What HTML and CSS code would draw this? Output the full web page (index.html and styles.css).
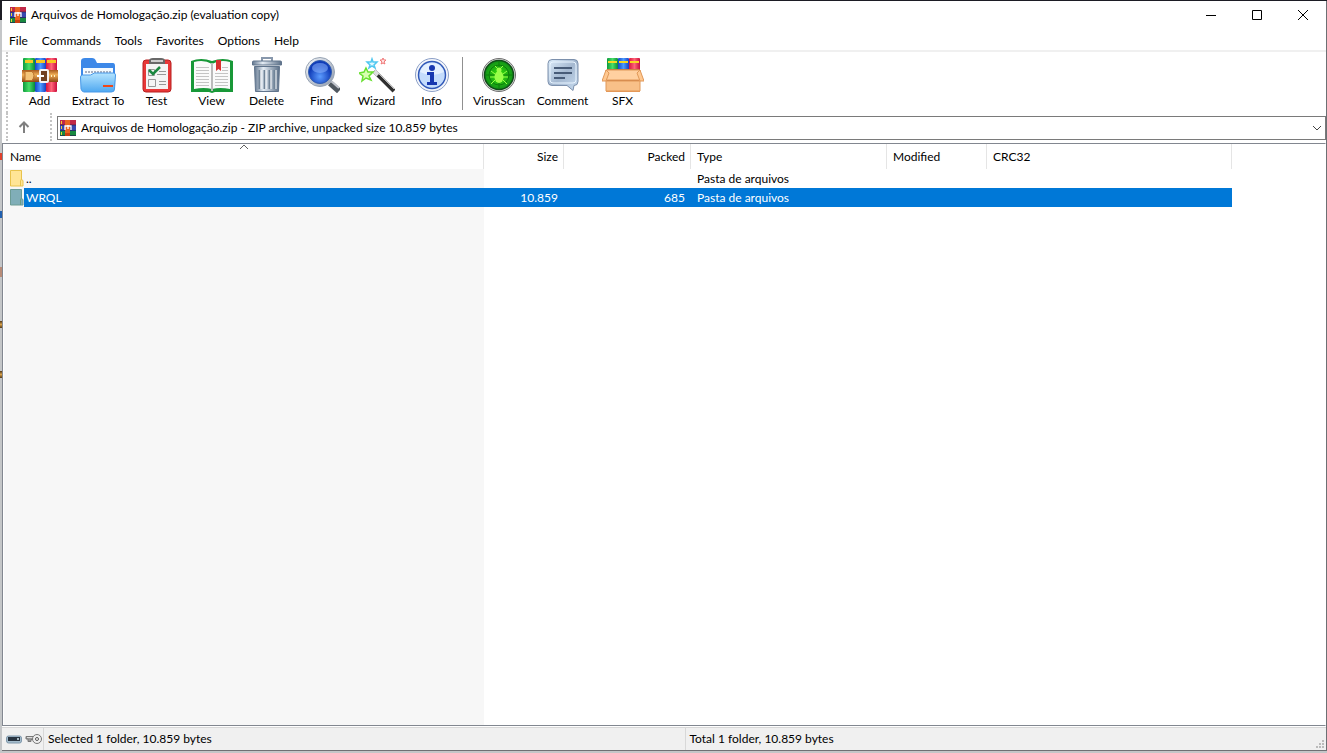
FILE: index.html
```html
<!DOCTYPE html>
<html lang="pt">
<head>
<meta charset="utf-8">
<title>Arquivos de Homologação.zip (evaluation copy)</title>
<link rel="stylesheet" href="styles.css">
</head>
<body>
<svg class="defs" aria-hidden="true">
  <defs>
    <linearGradient id="gGreen"><stop offset="0" stop-color="#0c9a3c"/><stop offset=".5" stop-color="#4ade68"/><stop offset="1" stop-color="#0a8a38"/></linearGradient>
    <linearGradient id="gBlue"><stop offset="0" stop-color="#1746c8"/><stop offset=".5" stop-color="#4b9bff"/><stop offset="1" stop-color="#1c3fc0"/></linearGradient>
    <linearGradient id="gRed"><stop offset="0" stop-color="#d8143c"/><stop offset=".5" stop-color="#ff6478"/><stop offset="1" stop-color="#c80c3c"/></linearGradient>
    <linearGradient id="gBelt" x2="0" y2="1"><stop offset="0" stop-color="#a8581c"/><stop offset=".4" stop-color="#f0b058"/><stop offset="1" stop-color="#8c4410"/></linearGradient>
    <linearGradient id="gFolder" x2="0" y2="1"><stop offset="0" stop-color="#b4e4ff"/><stop offset="1" stop-color="#4fa8f0"/></linearGradient>
    <linearGradient id="gSteel"><stop offset="0" stop-color="#647890"/><stop offset=".35" stop-color="#e4ecf4"/><stop offset="1" stop-color="#5c7088"/></linearGradient>
    <linearGradient id="gSilver" x2="1" y2="1"><stop offset="0" stop-color="#f8fafc"/><stop offset="1" stop-color="#8c98ac"/></linearGradient>
    <radialGradient id="gLens" cy=".7"><stop offset="0" stop-color="#5c9cff"/><stop offset="1" stop-color="#103cb8"/></radialGradient>
    <radialGradient id="gScan"><stop offset="0" stop-color="#38e808"/><stop offset="1" stop-color="#109018"/></radialGradient>
    <linearGradient id="gBubble" x2="1" y2="1"><stop offset="0" stop-color="#dcecfa"/><stop offset=".5" stop-color="#a4b8d0"/><stop offset="1" stop-color="#c8dcf0"/></linearGradient>
    <linearGradient id="gBox" x2="0" y2="1"><stop offset="0" stop-color="#f8c088"/><stop offset="1" stop-color="#e89858"/></linearGradient>
    <symbol id="books" viewBox="0 0 16 16">
      <path fill="#c02848" d="M0 0h16v5H0z"/><path fill="#3848b0" d="M0 5h16v6H0z"/><path fill="#188840" d="M0 11h16v5H0z"/>
      <path stroke="#20204c" d="M0 5h16M0 10.500h16M0 15.500h16" opacity=".65"/>
      <path fill="#f0d030" d="M1 1h1v3H1zM1 6h1v3H1zM1 12h1v3H1z"/>
      <path fill="#e86420" d="M5 0h5v16H5z"/><path fill="#c84010" d="M5 13h5v3H5z"/>
      <path fill="none" stroke="#fff" stroke-width="1.300" d="M5 10V6h6v4M8 5v4"/>
    </symbol>
  </defs>
</svg>
<main class="window">
  <header class="titlebar">
    <svg class="app-icon"><use href="#books"/></svg>
    <h1 class="title">Arquivos de Homologação.zip (evaluation copy)</h1>
    <div class="caption-buttons">
      <button class="caption" aria-label="Minimize"><svg viewBox="0 0 12 12"><path d="M1 6.500h10"/></svg></button>
      <button class="caption" aria-label="Maximize"><svg viewBox="0 0 12 12"><path d="M1.500 1.500h9v9h-9z"/></svg></button>
      <button class="caption" aria-label="Close"><svg viewBox="0 0 12 12"><path d="M1 1l10 10M11 1L1 11"/></svg></button>
    </div>
  </header>
  <nav class="menubar">
    <button class="menu">File</button><button class="menu">Commands</button><button class="menu">Tools</button><button class="menu">Favorites</button><button class="menu">Options</button><button class="menu">Help</button>
  </nav>
  <div class="toolbar">
    <button class="tool"><svg viewBox="0 0 36 36">
      <rect x="1" y="1" width="12" height="34" rx="1" fill="url(#gGreen)"/><rect x="13" y="1" width="11" height="34" rx="1" fill="url(#gBlue)"/><rect x="24" y="1" width="11" height="34" rx="1" fill="url(#gRed)"/>
      <path fill="#f8c820" d="M3 3h8v3H3zM14 3h9v3h-9zM25 3h9v3h-9z"/>
      <path fill="url(#gBelt)" d="M0 13h36v12H0z"/><path fill="#f4c478" stroke="#b87028" d="M3 14.500h7q4 4 0 9H3z"/>
      <rect x="18" y="13" width="8" height="12" rx="1" fill="#704020" stroke="#f4f4f4" stroke-width="2"/><path stroke="#fff" stroke-width="2" d="M15 19h7"/><path fill="#fff0c0" d="M29 18h1v2h-1zM32 18h1v2h-1z"/></svg><span>Add</span></button>
    <button class="tool wide"><svg viewBox="0 0 36 36">
      <path fill="#3c88e8" d="M1 4q0-3 4-3h7q3 0 4 3l1 2h16q2 0 2 3v20H1z"/><path fill="#f4faff" d="M3 11h30v14H3z"/>
      <path stroke="#a8b0c0" stroke-width="2" stroke-dasharray="2 1" d="M5 15h27"/>
      <path fill="url(#gFolder)" stroke="#4898e8" d="M.5 20q0-2 2-2h8l4-2h19q2 0 2 2l-1 14q0 3-3 3H4q-2 0-3-3z"/><path fill="#f04818" d="M23 28h10v2H23z"/></svg><span>Extract To</span></button>
    <button class="tool"><svg viewBox="0 0 36 36">
      <rect x="4" y="3" width="28" height="32" rx="3" fill="#e83838" stroke="#b82020"/><path fill="#f4f4f4" d="M7 7h22v25H7z"/>
      <path fill="#686868" d="M10 4q0-3 4-3h8q4 0 4 3v3H10z"/><path stroke="#ccc" stroke-width="2" d="M12 4h12"/>
      <path fill="none" stroke="#989898" d="M9.500 12.500h6v6h-6zM9.500 22.500h7v7h-7zM20 14.500h7M18 17.500h9M20 24.500h7M20 27.500h7"/>
      <path fill="none" stroke="#1a8840" stroke-width="2.500" d="M10 13l4 4 7-7"/></svg><span>Test</span></button>
    <button class="tool"><svg class="book" viewBox="0 0 42 36">
      <path fill="#189838" d="M0 4q10-4 21 0 11-4 21 0v31H24l-3 1-3-1H0z"/>
      <path fill="#fafafa" d="M3 5q10-3 18 2v25q-8-2-18 0zM39 5q-10-3-18 2v25q8-2 18 0z"/>
      <path stroke="#c4c4c4" d="M5 10.500h13M5 13.500h13M5 16.500h13M5 19.500h13M5 22.500h13M5 25.500h13M5 28.500h13M24 16.500h13M24 19.500h13M24 22.500h13M24 25.500h13M24 28.500h13M31 10.500h6M31 13.500h6"/>
      <path fill="#bbb" d="M20 6h2v28h-2z"/><path fill="#d83030" d="M25 3h5v11l-2.500-2-2.500 2z"/></svg><span>View</span></button>
    <button class="tool"><svg viewBox="0 0 36 36">
      <path fill="none" stroke="#8898ac" stroke-width="2" d="M13 4V1h10v3"/><path fill="url(#gSteel)" stroke="#60748c" d="M3.500 8V5q0-1 1-1h27q1 0 1 1v3z"/>
      <path fill="url(#gSteel)" stroke="#60748c" d="M5.500 9.500h25l-1 25h-23z"/><path stroke="#708498" stroke-width="2" d="M10.500 13v19M15.500 13v19M20.500 13v19M25.500 13v19"/><path stroke="#fff" d="M12 13v19M17 13v19M22 13v19M27 13v19"/></svg><span>Delete</span></button>
    <button class="tool"><svg viewBox="0 0 36 36">
      <path stroke="#505860" stroke-width="6" d="M26 26l9 8"/><path stroke="#c0c4cc" stroke-width="2" d="M27 24l8 7"/>
      <circle cx="16" cy="15" r="14.500" fill="url(#gSilver)" stroke="#98a4b4"/><circle cx="16" cy="15" r="11.500" fill="url(#gLens)" stroke="#305cb0"/>
      <ellipse cx="16" cy="11" rx="8" ry="5" fill="#8cb4ff" opacity=".55"/></svg><span>Find</span></button>
    <button class="tool"><svg viewBox="0 0 36 36">
      <path stroke="#303030" stroke-width="4" d="M15 14l20 20"/><path stroke="#bbb" stroke-width="1" d="M17 14l18 18"/><path stroke="#ddd" stroke-width="4" d="M15 14l4 4"/>
      <path fill="#d8ffb0" stroke="#68e030" stroke-width="1.500" d="M7 11l2 4 5 0-4 4 2 4-5-2-4 3 1-5-4-3 5-1z"/>
      <path fill="#e0f8ff" stroke="#50c8f0" stroke-width="1.500" d="M13 2l1 3 4 0-3 3 1 3-3-2-3 2 1-3-3-3 4 0z"/>
      <path fill="#ffe0e0" stroke="#f07878" d="M24 1l1 2 2 0-2 2 1 2-2-1-2 1 1-2-2-2 2 0z"/></svg><span>Wizard</span></button>
    <button class="tool"><svg viewBox="0 0 36 36">
      <circle cx="18" cy="18" r="16.500" fill="#f4f6fa" stroke="#8ca0c8"/><circle cx="18" cy="18" r="13.500" fill="#c4dcfc" stroke="#3058b8" stroke-width="1.500"/>
      <path fill="#e4f0ff" d="M6 15q3-9 12-9t12 9q-12 6-24 0z"/><circle cx="18" cy="11" r="3" fill="#1838b0"/><path fill="#1838b0" d="M13 15h7v10h3v3H13v-3h3v-7h-3z"/></svg><span>Info</span></button>
    <span class="divider"></span>
    <button class="tool wide"><svg viewBox="0 0 36 36">
      <circle cx="18" cy="18" r="16.500" fill="#d8d8d8" stroke="#707070"/><circle cx="18" cy="18" r="14.500" fill="url(#gScan)" stroke="#104c18" stroke-width="1.500"/>
      <path fill="none" stroke="#0c7c0c" d="M18 4v28M4 18h28M8 18a10 10 0 0120 0 10 10 0 01-20 0"/><ellipse cx="18" cy="20" rx="4.500" ry="6" fill="#98ff48"/><circle cx="18" cy="13" r="2.500" fill="#98ff48"/>
      <path fill="none" stroke="#98ff48" d="M14 17l-4-3M22 17l4-3M14 20H9M22 20h5M14 23l-4 4M22 23l4 4M17 12l-3-3M19 12l3-3"/></svg><span>VirusScan</span></button>
    <button class="tool wider"><svg viewBox="0 0 36 36">
      <path fill="url(#gBubble)" stroke="#7c90ac" d="M7 2.500h22q4 0 4 4v18q0 4-4 4l-1 5-6-5H7q-4 0-4-4v-18q0-4 4-4z"/>
      <rect x="5" y="5" width="26" height="21" rx="3" fill="none" stroke="#e8f4ff"/><path stroke="#485c78" stroke-width="2" d="M9 11h18M9 16h18M9 21h11"/></svg><span>Comment</span></button>
    <button class="tool"><svg class="book" viewBox="0 0 42 36">
      <rect x="5" y="1" width="11" height="16" rx="1" fill="url(#gGreen)"/><rect x="16" y="1" width="11" height="16" rx="1" fill="url(#gBlue)"/><rect x="27" y="1" width="11" height="16" rx="1" fill="url(#gRed)"/>
      <path fill="#f8d820" d="M6 4h9v2H6zM17 4h9v2h-9zM28 4h9v2h-9z"/><path fill="url(#gBox)" d="M4 13h34v22H4z"/><path fill="#c06c34" d="M5 12h32v12H5z"/>
      <path fill="#f8c088" stroke="#e09858" d="M4 24h34v10H4z"/>
      <path fill="#ffd0a0" stroke="#e09858" d="M4 13h34v10H4z"/><path fill="#ffc890" stroke="#e09858" d="M4 13l3 3-3 8H0zM38 13l-3 3 3 8h4z"/></svg><span>SFX</span></button>
  </div>
  <div class="addressbar">
    <div class="up-cell"><button class="up" aria-label="Up one level"><svg viewBox="0 0 12 12"><path d="M6 12V1.500M1.500 6L6 1.500 10.500 6"/></svg></button></div>
    <div class="path">
      <svg class="app-icon"><use href="#books"/></svg>
      <select class="path-select" aria-label="Archive path"><option>Arquivos de Homologação.zip - ZIP archive, unpacked size 10.859 bytes</option></select>
      <svg class="chevron" viewBox="0 0 10 6"><path d="M1 1l4 4 4-4"/></svg>
    </div>
  </div>
  <section class="list">
    <table class="files">
      <colgroup><col class="c-name"><col class="c-size"><col class="c-packed"><col class="c-type"><col class="c-modified"><col class="c-crc"></colgroup>
      <thead><tr><th><span class="sorted">Name<svg class="sort" viewBox="0 0 10 6"><path d="M1 5l4-4 4 4"/></svg></span></th><th class="num">Size</th><th class="num">Packed</th><th>Type</th><th>Modified</th><th>CRC32</th></tr></thead>
      <tbody>
        <tr><td class="name"><div class="entry"><svg class="folder" viewBox="0 0 14 19"><path fill="#ffe596" stroke="#e8c34c" d="M.500 1.500h11v9l1.500 1v5.500H.500z"/><path fill="none" stroke="#e8c34c" d="M10.500 17v-5l1-2"/></svg><span class="label">..</span></div></td><td></td><td></td><td>Pasta de arquivos</td><td></td><td></td></tr>
        <tr class="selected"><td class="name"><div class="entry"><svg class="folder" viewBox="0 0 14 19"><path fill="#80aeb8" stroke="#6c9c94" d="M.500 1.500h11v9l1.500 1v5.500H.500z"/><path fill="none" stroke="#6c9c84" d="M10.500 17v-5l1-2"/></svg><span class="label">WRQL</span></div></td><td class="num">10.859</td><td class="num">685</td><td>Pasta de arquivos</td><td></td><td></td></tr>
      </tbody>
    </table>
  </section>
  <footer class="statusbar">
    <div class="status-icons">
      <svg viewBox="0 0 16 12"><rect x=".5" y="3" width="15" height="7" rx="2" fill="#a4bccc" stroke="#8098ac"/><path fill="#283440" d="M2 4h12v4H2z"/><path fill="#a8b8c0" d="M11 5h2v2h-2z"/></svg>
      <svg viewBox="0 0 18 12"><path fill="#999" stroke="#777" d="M1 3.500h9v3H6v2H3V6H1z"/><path stroke="#ddd" d="M2 4.500h9"/><circle cx="12" cy="6" r="4.500" fill="#eee" stroke="#777"/><circle cx="12" cy="6" r="1.500" fill="#fff" stroke="#555"/></svg>
    </div>
    <div class="status">Selected 1 folder, 10.859 bytes</div>
    <div class="status">Total 1 folder, 10.859 bytes<svg class="grip" viewBox="0 0 10 10"><path fill="#bbb" d="M6 0h2v2H6zM3 3h2v2H3zM6 3h2v2H6zM0 6h2v2H0zM3 6h2v2H3zM6 6h2v2H6z"/></svg></div>
  </footer>
</main>
</body>
</html>
```
FILE: styles.css
```css
* { box-sizing: border-box; }

body {
  margin: 0;
  min-height: 100vh;
  display: flex;
  padding: 1px 0 2px 2px;
  font: 12px/16px "Segoe UI", Lato, sans-serif;
  color: #000;
  background:
    linear-gradient(#e0402c, #e0402c) 0 153px / 2px 7px no-repeat,
    linear-gradient(#2060b0, #2060b0) 0 211px / 2px 7px no-repeat,
    linear-gradient(#b88c78, #b88c78) 0 267px / 2px 10px no-repeat,
    linear-gradient(#503818, #d8a048, #503818) 0 321px / 2px 7px no-repeat,
    linear-gradient(#503818, #d8a048, #503818) 0 371px / 2px 7px no-repeat,
    linear-gradient(#1c1c24 20px, #c4c6c8 20px);
}

button, select { font: inherit; color: inherit; border: 0; background: none; padding: 0; margin: 0; }

.defs { position: absolute; width: 0; height: 0; }

.window {
  flex: 1;
  min-width: 0;
  display: flex;
  flex-direction: column;
  background: #fff;
  border-right: 1px solid #6c7074;
  border-bottom: 1px solid #707074;
}

.app-icon { width: 16px; height: 16px; flex: none; }

.titlebar { display: flex; align-items: center; height: 30px; padding: 0 0 2px 8px; }
.title { flex: 1; margin: 0 0 0 5px; font: inherit; }
.caption-buttons { display: flex; }
.caption { width: 46px; height: 28px; display: grid; place-items: center; }
.caption svg { width: 12px; height: 12px; fill: none; stroke: #000; }

.menubar { display: flex; height: 21px; padding-left: 7px; gap: 14px; border-bottom: 2px solid #f0f0f0; }
.menu { height: 20px; }

.toolbar {
  display: flex;
  height: 61px;
  padding: 5px 0 3px 4px;
  margin-left: 4px;
  border-left: 2px dotted #c4c4c4;
}
.tool { width: 55px; display: flex; flex-direction: column; align-items: center; white-space: nowrap; }
.tool svg { width: 36px; height: 36px; flex: none; }
.tool .book { width: 42px; }
.tool.wide { width: 62px; }
.tool.wider { width: 65px; }
.divider { width: 1px; background: #909090; margin: 0 5px 0 3px; }

.addressbar { display: flex; height: 29px; padding: 3px 0 2px 4px; align-items: stretch; }
.up-cell { width: 46px; margin: -3px 4px -1px 0; border: 2px dotted #c4c4c4; border-width: 0 2px; display: flex; align-items: center; padding-left: 10px; }
.up svg { display: block; width: 12px; height: 12px; fill: none; stroke: #808080; stroke-width: 2; }
.path { flex: 1; display: flex; align-items: center; gap: 5px; margin-left: 1px; padding: 0 3px 0 2px; border: 1px solid #7a7a7a; }
.path-select { flex: 1; min-width: 0; height: 20px; appearance: none; }
.chevron { width: 10px; height: 6px; fill: none; stroke: #444; pointer-events: none; }

.list {
  flex: 1;
  margin-top: 1px;
  border: 1px solid #828790;
  border-right-color: #fff;
  padding-left: 1px;
  background: linear-gradient(#f7f7f7, #f7f7f7) 1px 25px / 480px 100% no-repeat;
  overflow: hidden;
}
.files { table-layout: fixed; width: 1228px; border-collapse: separate; border-spacing: 0; }
.c-name { width: 480px; }
.c-size { width: 80px; }
.c-packed { width: 127px; }
.c-type { width: 196px; }
.c-modified { width: 100px; }
.c-crc { width: 245px; }
.files th { height: 25px; padding: 0 5px 0 6px; border-right: 1px solid #e5e5e5; font-weight: normal; text-align: left; }
.files td { height: 19px; padding: 0 6px; line-height: 19px; }
.files .num { text-align: right; }
.files td.num { padding-right: 6px; }
.sorted { display: block; position: relative; }
.sort { position: absolute; left: 49%; top: -5px; width: 10px; height: 6px; fill: none; stroke: #606060; }
.selected td { background: #0078d7; color: #fff; }
.files td.name { background: none; padding-right: 0; }
.entry { display: flex; height: 19px; }
.folder { width: 14px; height: 19px; flex: none; }
.label { flex: 1; padding-left: 2px; }
.selected .label { background: #0078d7; }

.statusbar {
  display: flex;
  align-items: center;
  height: 23px;
  margin-top: 1px;
  border-top: 1px solid #d8d8d8;
  background: #f0f0f0;
}
.status-icons { display: flex; gap: 3px; width: 41px; padding-left: 4px; }
.status-icons svg { height: 12px; width: 16px; flex: none; }
.status-icons svg + svg { width: 18px; }
.status { flex: 1; display: flex; justify-content: space-between; height: 22px; padding-left: 4px; line-height: 22px; border-left: 1px solid #d8d8d8; }
.grip { width: 10px; height: 10px; align-self: flex-end; }
```
